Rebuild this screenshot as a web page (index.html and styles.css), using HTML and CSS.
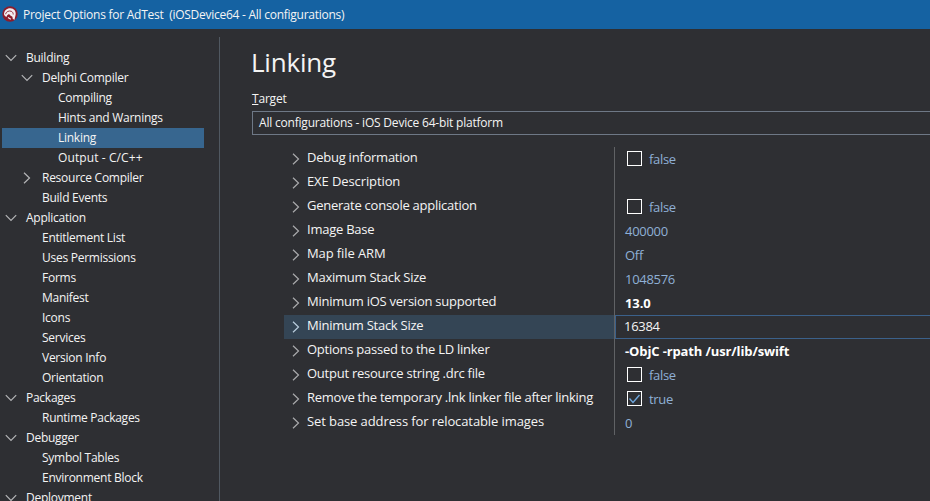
FILE: index.html
```html
<!DOCTYPE html>
<html lang="en">
<head>
<meta charset="utf-8">
<title>Project Options for AdTest</title>
<link rel="stylesheet" href="styles.css">
</head>
<body>
<svg width="0" height="0" class="defs">
  <symbol id="down" viewBox="0 0 12 8"><path d="M.8 1.2 6 6.5l5.200-5.300" fill="none" stroke="currentColor" stroke-width="1.200"/></symbol>
  <symbol id="right" viewBox="0 0 8 12"><path d="M1 .8 6.500 6 1 11.200" fill="none" stroke="currentColor" stroke-width="1.200"/></symbol>
</svg>
<header class="titlebar">
  <svg class="logo" viewBox="0 0 16 16"><circle cx="8" cy="8" r="7.700" fill="#8c1d2c"/><path d="M2 8.500C2 4.500 5 2 8.500 2.200c3.500.2 5.500 2.800 5.200 5.800-.2 2.200-1 3.800-1 5.800l-1.900-.8-.4-2.300-2-1.200-1.400-1.500-1.800 1.200-.4 1.500-1.700-.4z" fill="#f3eef1"/><path d="M3.500 8.200C4.200 5.500 7 4.400 9.300 5.300c1.300.6 1.900 1.700 1.900 3.200M6.300 10.500l2.200 1.500" fill="none" stroke="#8c1d2c" stroke-width=".9"/><path d="M6 11.500l2.800 1.800" stroke="#f3eef1" stroke-width="1.100"/></svg>
  <h1>Project Options for AdTest&nbsp; (iOSDevice64 - All configurations)</h1>
</header>
<div class="body">
  <nav class="tree">
    <div class="node l0"><svg class="down"><use href="#down"/></svg><span>Building</span></div>
    <div class="node l1"><svg class="down"><use href="#down"/></svg><span>Delphi Compiler</span></div>
    <div class="node l2"><span>Compiling</span></div>
    <div class="node l2"><span>Hints and Warnings</span></div>
    <div class="node l2 selected"><span>Linking</span></div>
    <div class="node l2"><span class="symbols">Output - C/C++</span></div>
    <div class="node l1"><svg class="right"><use href="#right"/></svg><span>Resource Compiler</span></div>
    <div class="node l1"><span>Build Events</span></div>
    <div class="node l0"><svg class="down"><use href="#down"/></svg><span>Application</span></div>
    <div class="node l1"><span>Entitlement List</span></div>
    <div class="node l1"><span>Uses Permissions</span></div>
    <div class="node l1"><span>Forms</span></div>
    <div class="node l1"><span>Manifest</span></div>
    <div class="node l1"><span>Icons</span></div>
    <div class="node l1"><span>Services</span></div>
    <div class="node l1"><span>Version Info</span></div>
    <div class="node l1"><span>Orientation</span></div>
    <div class="node l0"><svg class="down"><use href="#down"/></svg><span>Packages</span></div>
    <div class="node l1"><span>Runtime Packages</span></div>
    <div class="node l0"><svg class="down"><use href="#down"/></svg><span>Debugger</span></div>
    <div class="node l1"><span>Symbol Tables</span></div>
    <div class="node l1"><span>Environment Block</span></div>
    <div class="node l0"><svg class="down"><use href="#down"/></svg><span>Deployment</span></div>
  </nav>
  <main class="page">
    <h2>Linking</h2>
    <label class="target"><u>T</u>arget</label>
    <div class="combo"><span>All configurations - iOS Device 64-bit platform</span></div>
    <div class="grid">
      <div class="row"><div class="name"><svg class="right"><use href="#right"/></svg><span>Debug information</span></div><div class="value"><i class="box"></i><span>false</span></div></div>
      <div class="row"><div class="name"><svg class="right"><use href="#right"/></svg><span class="loose">EXE Description</span></div><div class="value"></div></div>
      <div class="row"><div class="name"><svg class="right"><use href="#right"/></svg><span>Generate console application</span></div><div class="value"><i class="box"></i><span>false</span></div></div>
      <div class="row"><div class="name"><svg class="right"><use href="#right"/></svg><span>Image Base</span></div><div class="value"><span>400000</span></div></div>
      <div class="row"><div class="name"><svg class="right"><use href="#right"/></svg><span class="loose">Map file ARM</span></div><div class="value"><span>Off</span></div></div>
      <div class="row"><div class="name"><svg class="right"><use href="#right"/></svg><span>Maximum Stack Size</span></div><div class="value"><span>1048576</span></div></div>
      <div class="row"><div class="name"><svg class="right"><use href="#right"/></svg><span>Minimum iOS version supported</span></div><div class="value changed"><span>13.0</span></div></div>
      <div class="row active"><div class="name"><svg class="right"><use href="#right"/></svg><span>Minimum Stack Size</span></div><div class="value"><span>16384</span></div></div>
      <div class="row"><div class="name"><svg class="right"><use href="#right"/></svg><span>Options passed to the LD linker</span></div><div class="value changed"><span>-ObjC -rpath /usr/lib/swift</span></div></div>
      <div class="row"><div class="name"><svg class="right"><use href="#right"/></svg><span>Output resource string .drc file</span></div><div class="value"><i class="box"></i><span>false</span></div></div>
      <div class="row"><div class="name"><svg class="right"><use href="#right"/></svg><span>Remove the temporary .lnk linker file after linking</span></div><div class="value"><i class="box"><svg viewBox="0 0 13 13"><path d="M1.500 6.500 5 10.500 11.500 3" fill="none" stroke="#6ea6dc" stroke-width="1.400"/></svg></i><span>true</span></div></div>
      <div class="row"><div class="name"><svg class="right"><use href="#right"/></svg><span class="loose">Set base address for relocatable images</span></div><div class="value"><span>0</span></div></div>
    </div>
  </main>
</div>
</body>
</html>
```
FILE: styles.css
```css
* { box-sizing: border-box; }
body {
  margin: 0;
  height: 501px;
  overflow: hidden;
  background: #2e2f33;
  color: #f4f4f4;
  font: 12px/20px "Open Sans", "Noto Sans", sans-serif;
  white-space: nowrap;
}
.defs { display: block; }
h1, h2 { margin: 0; font-weight: 400; }
svg { flex: none; }
.titlebar {
  display: flex;
  align-items: center;
  height: 29px;
  padding: 0 0 0 2px;
  background: #1562a2;
}
.logo { width: 16px; height: 16px; margin-top: -1px; }
.titlebar h1 { margin-left: 5px; font-size: 12px; letter-spacing: -.26px; }
.body { display: flex; height: 472px; }
.tree {
  flex: none;
  width: 220px;
  margin-top: 8px;
  padding: 11px 15px 0 2px;
  border-right: 1px solid #505861;
  letter-spacing: -.26px;
}
.node { position: relative; display: flex; align-items: center; height: 20px; }
.node.l0 { padding-left: 24px; }
.node.l1 { padding-left: 40px; }
.node.l2 { padding-left: 56px; }
.node svg { color: #b4b5b7; margin-right: 9px; }
.node .down { width: 12px; height: 8px; margin-left: -21px; }
.node .right { width: 8px; height: 12px; margin-left: -19px; margin-right: 11px; }
.node.selected { width: 202px; background: #37668f; }
.node .symbols { letter-spacing: .1px; }
.page { flex: 1; min-width: 0; padding: 14px 0 0 32px; }
h2 { height: 39px; margin-left: -1px; font-size: 26px; line-height: 38px; letter-spacing: -.2px; }
.target { display: block; margin-top: 7px; height: 20px; letter-spacing: -.2px; }
.combo {
  height: 24px;
  margin-top: 2px;
  padding-left: 6px;
  border: 1px solid #6e7886;
  border-right: 0;
  line-height: 21px;
  letter-spacing: -.2px;
}
.grid { margin: 12px 0 0 32px; font-size: 13px; letter-spacing: -.25px; }
.row { display: flex; height: 24px; }
.name { display: flex; align-items: center; flex: none; width: 331px; padding-left: 8px; border-right: 1px solid #606265; }
.name svg { width: 8px; height: 12px; margin: 0 7px 1px 0; color: #a9aaac; }
.name span { height: 24px; }
.name .loose { letter-spacing: -.1px; }
.value { display: flex; flex: 1; align-items: center; padding-left: 10px; color: #8fb0d6; letter-spacing: -.3px; }
.value span { height: 20px; }
.value.changed { color: #fff; font-weight: 700; letter-spacing: -.12px; }
.box { width: 15px; height: 15px; margin: -1px 7px 0 2px; border: 1px solid #fff; }
.box svg { display: block; width: 13px; height: 13px; }
.row.active .name { background: #344555; }
.row.active .name svg { color: #b9cddd; }
.row.active .value { border: 1px solid #3b618b; border-right: 0; padding-left: 8px; color: #f4f4f4; }
.row.active .value span { height: 22px; }
```
